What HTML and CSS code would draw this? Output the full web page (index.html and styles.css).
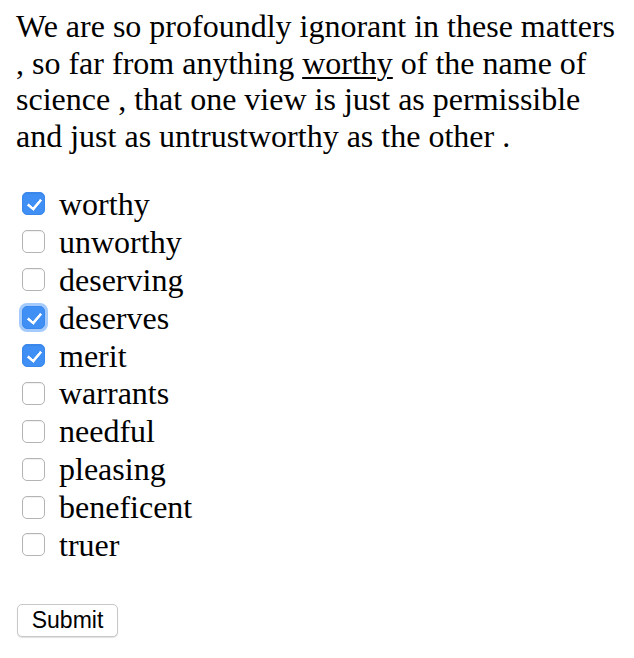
FILE: index.html
```html
<!DOCTYPE html>
<html>
<head>
<meta charset="utf-8">
<link rel="stylesheet" href="styles.css">
</head>
<body>
<p class="passage">We are so profoundly ignorant in these matters , so far from anything <u>worthy</u> of the name of science , that one view is just as permissible and just as untrustworthy as the other .</p>
<form class="choices">
  <label class="choice"><input type="checkbox" checked><span class="box"></span><span>worthy</span></label>
  <label class="choice"><input type="checkbox"><span class="box"></span><span>unworthy</span></label>
  <label class="choice"><input type="checkbox"><span class="box"></span><span>deserving</span></label>
  <label class="choice focus"><input type="checkbox" checked><span class="box"></span><span>deserves</span></label>
  <label class="choice"><input type="checkbox" checked><span class="box"></span><span>merit</span></label>
  <label class="choice"><input type="checkbox"><span class="box"></span><span>warrants</span></label>
  <label class="choice"><input type="checkbox"><span class="box"></span><span>needful</span></label>
  <label class="choice"><input type="checkbox"><span class="box"></span><span>pleasing</span></label>
  <label class="choice"><input type="checkbox"><span class="box"></span><span>beneficent</span></label>
  <label class="choice"><input type="checkbox"><span class="box"></span><span>truer</span></label>
  <button type="button" class="submit">Submit</button>
</form>
</body>
</html>
```
FILE: styles.css
```css
html, body { margin: 0; padding: 0; background: #fff; }
body {
  padding: 8px 16px;
  font-family: "Liberation Serif", "Times New Roman", serif;
  font-size: 32px;
  color: #000;
}
.passage {
  margin: 0;
  line-height: 36.5px;
}
.passage u { text-decoration-thickness: 2px; text-underline-offset: 3px; }
.choices {
  margin-top: 31px;
  display: flex;
  flex-direction: column;
}
.choice {
  display: flex;
  align-items: center;
  height: 37.9px;
  gap: 14px;
  padding-left: 6px;
  line-height: 38px;
}
.choice input { display: none; }
.box {
  width: 23px;
  height: 23px;
  box-sizing: border-box;
  border-radius: 5px;
  border: 1px solid #b4b4b4;
  background: #fff;
  box-shadow: inset 0 1px 1px rgba(0,0,0,0.06);
  flex: none;
  position: relative;
}
.choice input:checked + .box {
  background: #3f8ff4;
  border-color: #3a88ee;
}
.choice input:checked + .box::after {
  content: "";
  position: absolute;
  left: 7px;
  top: 3px;
  width: 6px;
  height: 11px;
  border: solid #fff;
  border-width: 0 3px 3px 0;
  border-radius: 1px;
  transform: rotate(40deg);
}
.choice.focus .box { box-shadow: 0 0 0 3px rgba(90,160,250,0.55); }
.submit {
  align-self: flex-start;
  margin-top: 40px;
  margin-left: 1px;
  width: 101px;
  height: 33px;
  font-family: "Liberation Sans", Arial, sans-serif;
  font-size: 23px;
  background: #fff;
  border: 1px solid #c8c8c8;
  border-radius: 5px;
  box-shadow: 0 1px 1px rgba(0,0,0,0.12);
  color: #000;
  padding: 0;
}
```
